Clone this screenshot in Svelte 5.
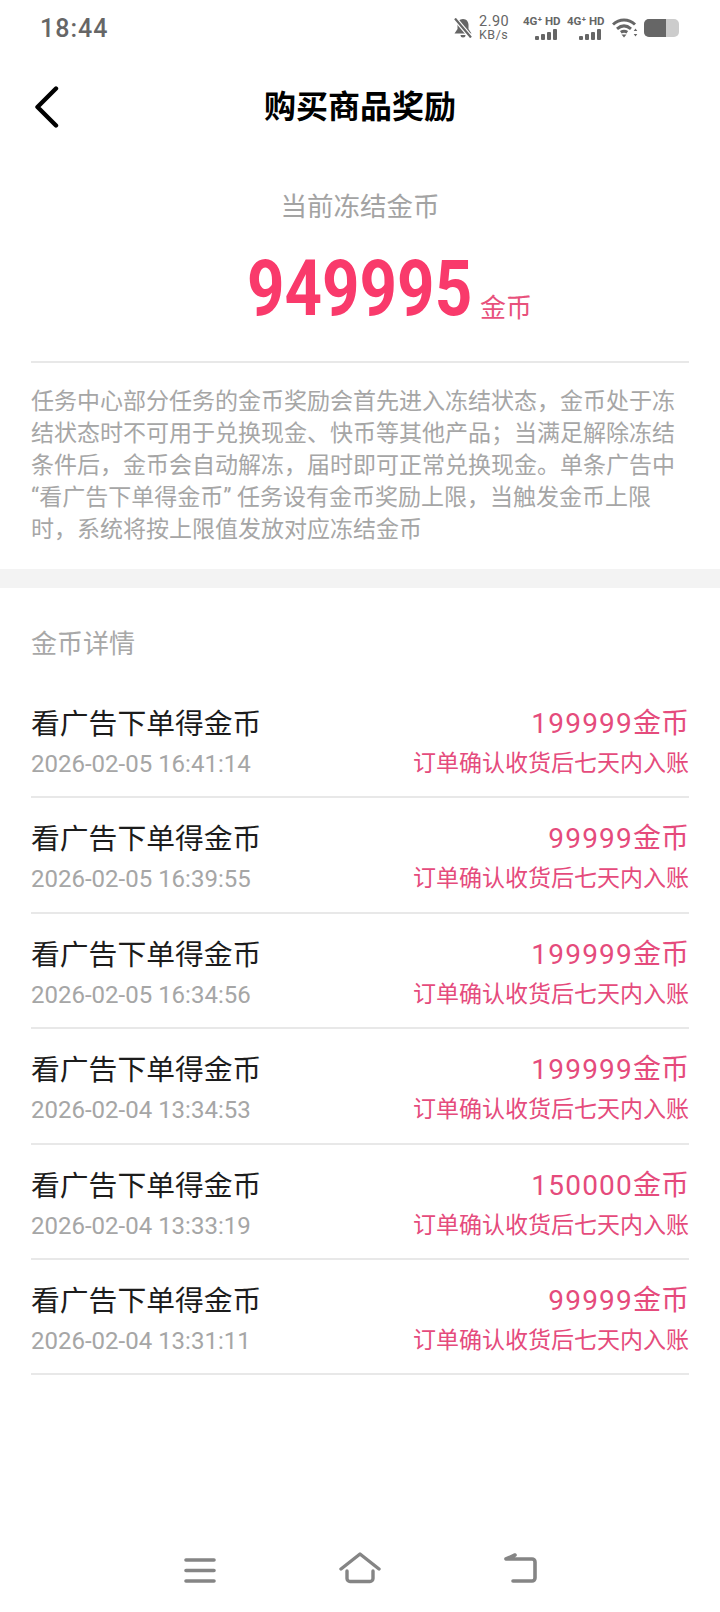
<script>
    const rows = [
        { time: "2026-02-05 16:41:14", coins: 199999 },
        { time: "2026-02-05 16:39:55", coins: 99999 },
        { time: "2026-02-05 16:34:56", coins: 199999 },
        { time: "2026-02-04 13:34:53", coins: 199999 },
        { time: "2026-02-04 13:33:19", coins: 150000 },
        { time: "2026-02-04 13:31:11", coins: 99999 }
    ];
    const networks = [0, 1];
</script>

<div class="page">
    <!-- Status bar -->
    <div class="status">
        <span class="clock">18:44</span>
        <div class="status-right">
            <svg class="bell" width="20" height="20" viewBox="0 0 20 20">
                <path d="M10 1c3.600 0 5.500 2.800 5.500 5.800v4.200l3 4.500H1.500l3-4.500V6.800C4.500 3.800 6.400 1 10 1z" fill="#666" />
                <path d="M7.500 17h5a2.500 2.500 0 0 1-5 0z" fill="#666" />
                <path d="M2 0.500l16 19" stroke="#fff" stroke-width="4.500" />
                <path d="M2 0.500l16 19" stroke="#666" stroke-width="2.200" />
            </svg>
            <div class="speed"><span>2.90</span><span class="unit">KB/s</span></div>
            {#each networks as n}
                <div class="net">
                    <span class="net-label">4G⁺ HD</span>
                    <div class="bars">
                        <i style="height: 4px"></i>
                        <i style="height: 6px"></i>
                        <i style="height: 8px"></i>
                        <i style="height: 11px"></i>
                    </div>
                </div>
            {/each}
            <svg class="wifi" width="26" height="20" viewBox="0 0 26 20" fill="none" stroke="#666" stroke-width="3">
                <path d="M1 6.500C7.500 0.500 16.500 0.500 23 6.500" />
                <path d="M5 10.800c4.500-3.800 9.500-3.800 14 0" />
                <path d="M8.800 14.300c2.500-1.600 4-1.600 6.500 0" />
                <path d="M9.500 16.500h5l-2.500 3z" fill="#666" stroke="none" />
                <path d="M23.500 10.500l-1.800 2.500h3.600zM23.500 18.500l-1.800-2.500h3.600z" fill="#666" stroke="none" />
            </svg>
            <div class="battery"><div class="level"></div></div>
        </div>
    </div>

    <!-- Header -->
    <header class="header">
        <svg class="back" width="28" height="42" viewBox="0 0 28 42" fill="none">
            <path d="M23 2.500L4.500 21 23 39.500" stroke="#000" stroke-width="4.400" stroke-linecap="round" stroke-linejoin="round" />
        </svg>
        <h1>购买商品奖励</h1>
    </header>

    <!-- Frozen total -->
    <section class="summary">
        <div class="summary-label">当前冻结金币</div>
        <div class="total">
            <span class="total-num">949995</span>
            <span class="total-unit">金币</span>
        </div>
    </section>

    <p class="intro">任务中心部分任务的金币奖励会首先进入冻结状态，金币处于冻结状态时不可用于兑换现金、快币等其他产品；当满足解除冻结条件后，金币会自动解冻，届时即可正常兑换现金。单条广告中 “看广告下单得金币” 任务设有金币奖励上限，当触发金币上限时，系统将按上限值发放对应冻结金币</p>

    <div class="band"></div>

    <!-- Detail list -->
    <section class="details">
        <div class="details-title">金币详情</div>
        <div class="rows">
            {#each rows as row}
                <div class="row">
                    <div class="row-left">
                        <div class="row-name">看广告下单得金币</div>
                        <div class="row-time">{row.time}</div>
                    </div>
                    <div class="row-right">
                        <div class="row-coins"><span class="digits">{row.coins}</span>金币</div>
                        <div class="row-note">订单确认收货后七天内入账</div>
                    </div>
                </div>
            {/each}
        </div>
    </section>

    <!-- Navigation bar -->
    <nav class="nav">
        <svg class="nav-menu" width="32" height="26" viewBox="0 0 32 26" fill="none" stroke="#858585" stroke-width="3.600" stroke-linecap="round">
            <path d="M2 3h28M2 13.500h28M2 24h28" />
        </svg>
        <svg width="42" height="32" viewBox="0 0 42 32" fill="none" stroke="#858585" stroke-width="3.400" stroke-linecap="round" stroke-linejoin="round">
            <path d="M2 17L21 2l19 15" />
            <path d="M8 19v7.500a3 3 0 0 0 3 3h20a3 3 0 0 0 3-3V19" />
        </svg>
        <svg class="nav-back" width="36" height="32" viewBox="0 0 36 32" fill="none" stroke="#858585" stroke-width="3.600" stroke-linecap="round" stroke-linejoin="round">
            <path d="M12 2L3 6h26a3 3 0 0 1 3 3v16a3 3 0 0 1-3 3H10" />
        </svg>
    </nav>
</div>

<style>
    :global(body) {
        margin: 0;
        background: #fff;
    }

    .page {
        width: 720px;
        height: 1612px;
        display: flex;
        flex-direction: column;
        font-family: Roboto, "Noto Sans CJK SC", sans-serif;
        overflow: hidden;
    }

    .status {
        height: 56px;
        padding: 0 41px 0 40px;
        display: flex;
        justify-content: space-between;
        align-items: center;
        color: #666;
    }

    .clock {
        font-size: 25px;
        font-weight: 500;
        letter-spacing: 1px;
    }

    .status-right {
        display: flex;
        align-items: center;
    }

    .bell {
        margin-right: 6px;
    }

    .speed {
        width: 38px;
        display: flex;
        flex-direction: column;
        font-size: 14.500px;
        line-height: 13px;
        letter-spacing: 0.5px;
    }

    .unit {
        font-size: 12.500px;
    }

    .net {
        width: 44px;
        display: flex;
        flex-direction: column;
        align-items: flex-end;
    }

    .net-label {
        width: 38px;
        font-size: 11.500px;
        font-weight: 700;
        line-height: 11px;
        white-space: nowrap;
    }

    .bars {
        display: flex;
        align-items: flex-end;
        gap: 2px;
        height: 11px;
        margin: 2px 4px 0 0;
    }

    .bars i {
        width: 4px;
        background: #666;
        border-radius: 1px;
    }

    .wifi {
        margin: 0 6px 0 7px;
    }

    .battery {
        width: 35px;
        height: 18px;
        background: #ccc;
        border-radius: 5px;
        overflow: hidden;
    }

    .level {
        width: 22px;
        height: 18px;
        background: #666;
    }

    .header {
        position: relative;
        height: 42px;
        margin-top: 30px;
        display: flex;
        justify-content: center;
        align-items: center;
    }

    .back {
        position: absolute;
        left: 33px;
        top: 0;
    }

    h1 {
        margin: 0;
        font-size: 32px;
        font-weight: 700;
        line-height: 42px;
        color: #000;
    }

    .summary {
        margin: 0 31px;
        padding-top: 61px;
        height: 235px;
        box-sizing: border-box;
        border-bottom: 2px solid #e8e8e8;
        text-align: center;
    }

    .summary-label {
        font-size: 26.500px;
        line-height: 36px;
        color: #a3a3a3;
    }

    .total {
        position: relative;
        display: flex;
        justify-content: center;
        margin-top: 29px;
        color: #f93a6b;
        height: 70px;
    }

    .total-num {
        display: inline-block;
        font-size: 77px;
        font-weight: 700;
        line-height: 70px;
        transform: scaleX(0.85);
    }

    /* hangs off the number, which stays centred on its own */
    .total-unit {
        position: absolute;
        left: calc(50% + 120px);
        top: 39px;
        font-size: 26px;
        line-height: 30px;
        color: #e8517c;
    }

    .intro {
        margin: 23px 31px 0;
        font-size: 23px;
        line-height: 32px;
        color: #a6a6a6;
    }

    .band {
        height: 19px;
        margin-top: 23px;
        background: #f3f3f3;
    }

    .details {
        padding: 0 31px;
    }

    .details-title {
        margin-top: 38px;
        font-size: 26px;
        line-height: 36px;
        color: #a8a8a8;
    }

    .rows {
        padding-top: 21px;
    }

    .row {
        height: 115.400px;
        box-sizing: border-box;
        padding-top: 21px;
        display: flex;
        justify-content: space-between;
        border-bottom: 2px solid #e8e8e8;
    }

    .row-name {
        font-size: 28.800px;
        line-height: 40px;
        color: #1c1c1c;
    }

    .row-time {
        font-size: 24px;
        line-height: 40px;
        color: #a6a6a6;
    }

    .row-right {
        text-align: right;
    }

    .row-coins {
        font-size: 28px;
        line-height: 40px;
        color: #e54b7c;
    }

    .digits {
        letter-spacing: 1.200px;
    }

    .row-note {
        font-size: 23px;
        line-height: 40px;
        color: #e54b7c;
    }

    .nav {
        margin-top: auto;
        height: 85px;
        box-sizing: border-box;
        padding: 25px 181px 0 184px;
        display: flex;
        justify-content: space-between;
        align-items: flex-start;
    }

    .nav-menu {
        margin-top: 5px;
    }

    .nav-back {
        margin-top: 1px;
    }
</style>
